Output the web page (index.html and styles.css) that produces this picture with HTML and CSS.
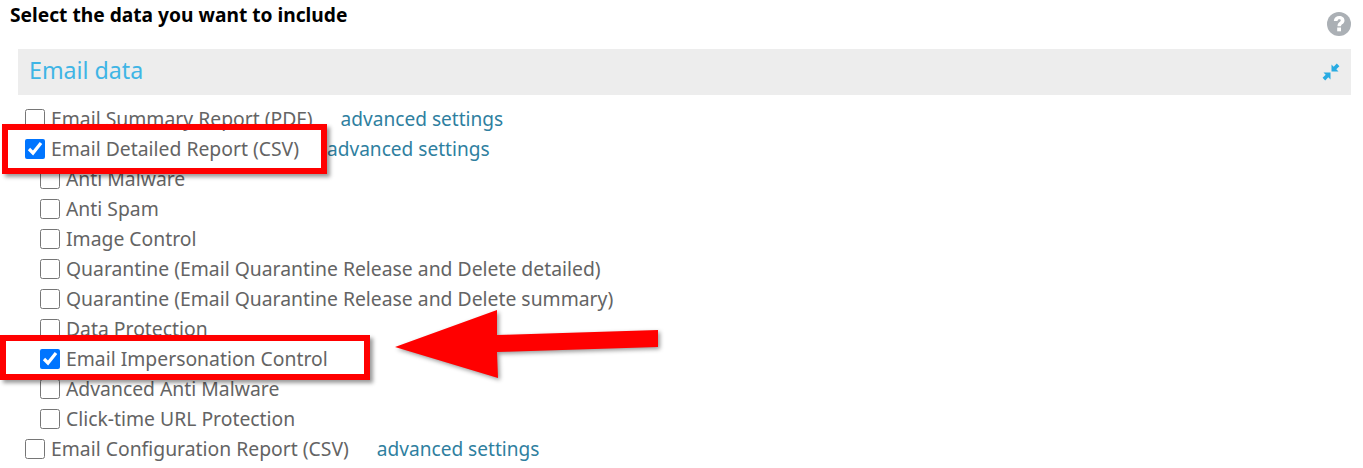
FILE: index.html
```html
<!DOCTYPE html>
<html lang="en">
<head>
    <meta charset="UTF-8">
    <meta name="viewport" content="width=device-width, initial-scale=1.0">
    <title>Select data</title>
    <link rel="stylesheet" href="styles.css">
</head>
<body>
    <div class="top-row">
        <h1>Select the data you want to include</h1>
        <svg class="help-icon" viewBox="0 0 24 24" width="24" height="24">
            <circle cx="12" cy="12" r="12" fill="#abb0b5"/>
            <path d="M6.800 9C7.100 5.800 9.300 4 12.300 4c3 0 5.200 1.800 5.200 4.400 0 1.900-1 2.900-2.400 3.900-.8.600-1 1-1 1.900h-3.600c0-2 .5-3 1.900-4 .9-.6 1.400-1.100 1.400-1.700 0-.7-.6-1.200-1.500-1.200-1 0-1.600.6-1.800 1.800z" fill="#fff"/>
            <rect x="10.200" y="15.500" width="3.800" height="3.800" fill="#fff"/>
        </svg>
    </div>

    <div class="section-bar">
        <h2>Email data</h2>
        <svg class="compress-icon" viewBox="0 0 18 18" width="18" height="18">
            <path d="M9.500 8.500V1.500l2.200 2.200L14.800.6l2.600 2.600-3.100 3.100 2.200 2.200z" fill="#29abe2"/>
            <path d="M8.500 9.500v7l-2.200-2.200-3.100 3.100-2.600-2.600 3.100-3.100-2.200-2.200z" fill="#29abe2"/>
        </svg>
    </div>

    <div class="option-list">
        <label class="option"><input type="checkbox"><span>Email Summary Report (PDF)</span><a href="#">advanced settings</a></label>
        <label class="option"><input type="checkbox" checked><span>Email Detailed Report (CSV)</span><a href="#">advanced settings</a></label>
        <label class="option sub"><input type="checkbox"><span>Anti Malware</span></label>
        <label class="option sub"><input type="checkbox"><span>Anti Spam</span></label>
        <label class="option sub"><input type="checkbox"><span>Image Control</span></label>
        <label class="option sub"><input type="checkbox"><span>Quarantine (Email Quarantine Release and Delete detailed)</span></label>
        <label class="option sub"><input type="checkbox"><span>Quarantine (Email Quarantine Release and Delete summary)</span></label>
        <label class="option sub"><input type="checkbox"><span>Data Protection</span></label>
        <label class="option sub"><input type="checkbox" checked><span>Email Impersonation Control</span></label>
        <label class="option sub"><input type="checkbox"><span>Advanced Anti Malware</span></label>
        <label class="option sub"><input type="checkbox"><span>Click-time URL Protection</span></label>
        <label class="option"><input type="checkbox"><span>Email Configuration Report (CSV)</span><a href="#">advanced settings</a></label>
    </div>

    <!-- annotations drawn over the screenshot -->
    <div class="callout callout-report"></div>
    <div class="callout callout-impersonation"></div>
    <svg class="callout-arrow" viewBox="0 0 280 90" width="280" height="90">
        <polygon points="5,37 107,0 107,25 268,20 268,37 107,42 108,68" fill="#ff0000"/>
    </svg>
</body>
</html>
```

FILE: styles.css
```css
body {
    margin: 0;
    height: 468px;
    overflow: hidden;
    position: relative;
    background-color: #ffffff;
    font-family: "Noto Sans", sans-serif;
    color: #646464;
}

.top-row {
    display: flex;
    justify-content: space-between;
    height: 49px;
    padding: 0 12px 0 10px;
}

h1 {
    margin: 2px 0 0;
    font-size: 19.2px;
    line-height: 25px;
    font-weight: 700;
    color: #000000;
}

.help-icon {
    margin-top: 12px;
}

.section-bar {
    display: flex;
    justify-content: space-between;
    align-items: center;
    height: 46px;
    margin: 0 12px 0 18px;
    padding: 0 11px;
    background-color: #ededed;
}

h2 {
    margin: 0 0 5px;
    font-size: 23.2px;
    font-weight: 400;
    color: #3fb5e5;
}

.option-list {
    padding: 9px 0 0 25px;
}

.option {
    display: flex;
    align-items: center;
    height: 30px;
    font-size: 19.35px;
}

.option.sub {
    padding-left: 15px;
}

.option input {
    width: 20px;
    height: 20px;
    margin: 0 6px 0 0;
}

.option span {
    margin-bottom: 2px;
}

.option a {
    margin-left: 28px;
    font-size: 19.1px;
    color: #2f7f9f;
    text-decoration: none;
}

.callout {
    position: absolute;
    box-sizing: border-box;
    border: 6px solid #ff0000;
    box-shadow: 3px 3px 4px rgba(0, 0, 0, 0.4);
}

.callout-report {
    left: 2px;
    top: 124px;
    width: 325px;
    height: 50px;
}

.callout-impersonation {
    left: 0;
    top: 335px;
    width: 370px;
    height: 45px;
}

.callout-arrow {
    position: absolute;
    left: 390px;
    top: 310px;
    filter: drop-shadow(2px 2px 2px rgba(0, 0, 0, 0.4));
}
```
